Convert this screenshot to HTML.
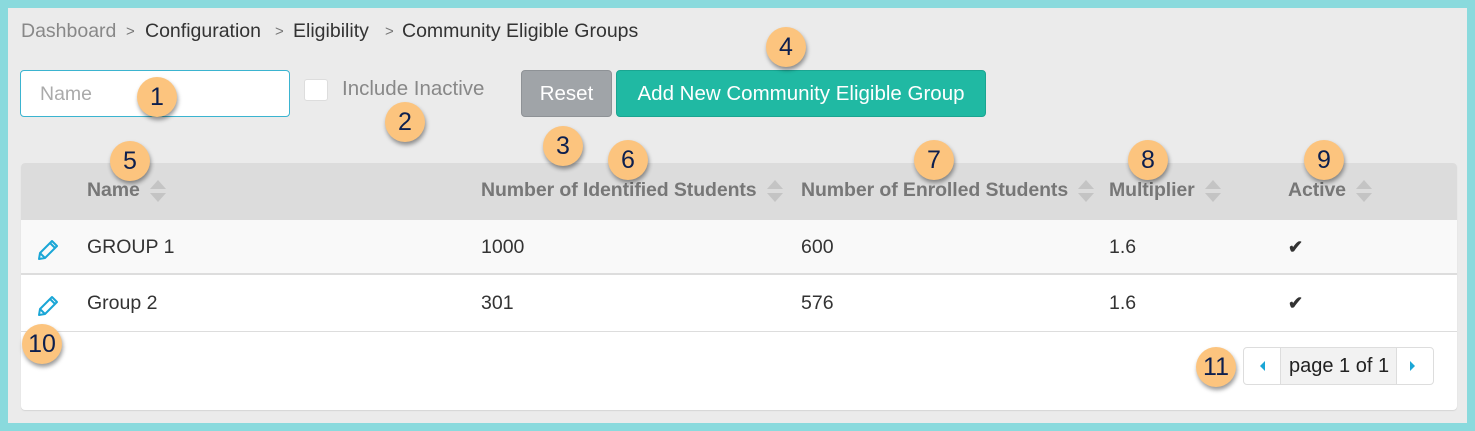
<!DOCTYPE html>
<html><head><meta charset="utf-8"><style>
*{box-sizing:border-box;margin:0;padding:0}
body{width:1475px;height:431px;background:#8adadd;position:relative;overflow:hidden;font-family:"Liberation Sans",sans-serif}
.in{position:absolute;left:8px;top:8px;width:1459px;height:415px;background:#ebebeb}
.a{position:absolute;white-space:nowrap}
.bc{top:20px;font-size:19.5px;color:#333}
.bc .g{color:#888}
.sep{color:#777;font-size:15px}
.inp{left:20px;top:70px;width:270px;height:47px;background:#fff;border:1px solid #3bb4d0;border-radius:4px;color:#aaa;font-size:19.5px;padding:12px 19px}
.cb{left:304px;top:79px;width:24px;height:22px;background:#fff;border:1px solid #ddd;border-radius:3px}
.btn{top:70px;height:47px;border-radius:4px;color:#fff;font-size:20.5px;line-height:45px;text-align:center}
.card{left:21px;top:163px;width:1436px;height:247px;background:#fff;border-radius:4px;box-shadow:0 1px 1px #d5d5d5;overflow:hidden}
.hd{position:absolute;left:0;top:0;width:100%;height:57px;background:#dcdcdc}
.r1{position:absolute;left:0;top:57px;width:100%;height:55px;background:#f9f9f9;border-bottom:2px solid #ddd}
.r2{position:absolute;left:0;top:114px;width:100%;height:55px;border-bottom:1px solid #ddd}
.h{top:16px;font-size:19.5px;font-weight:bold;color:#777;letter-spacing:-0.1px}
.s{display:inline-block;vertical-align:middle;margin-left:10px;width:16px;height:24px;position:relative}
.s:before{content:"";position:absolute;left:0;top:1px;border:8px solid transparent;border-top:0;border-bottom:9px solid #c4c4c4}
.s:after{content:"";position:absolute;left:0;top:14px;border:8px solid transparent;border-bottom:0;border-top:9px solid #c4c4c4}
.c{font-size:19.5px;color:#333}
.ck{font-size:18px;color:#333;font-weight:bold}
.bd{position:absolute;width:40px;height:40px;border-radius:50%;background:#fcc47e;color:#0d1f4e;font-size:25px;text-align:center;line-height:40px;box-shadow:1px 3px 4px rgba(0,0,0,.4)}
.pg{left:1243px;top:347px;width:191px;height:38px;border:1px solid #ddd;border-radius:4px;background:#fff}
</style></head><body>
<div class="in"></div>
<div class="a bc" style="left:21px"><span class="g">Dashboard</span></div>
<div class="a bc sep" style="left:126px;top:23px">&gt;</div>
<div class="a bc" style="left:145px">Configuration</div>
<div class="a bc sep" style="left:275px;top:23px">&gt;</div>
<div class="a bc" style="left:293px">Eligibility</div>
<div class="a bc sep" style="left:385px;top:23px">&gt;</div>
<div class="a bc" style="left:402px">Community Eligible Groups</div>
<div class="a inp">Name</div>
<div class="a cb"></div>
<div class="a" style="left:342px;top:77px;font-size:20.5px;color:#888">Include Inactive</div>
<div class="a btn" style="left:521px;width:91px;background:#a0a4a8;border:1px solid #8e9296">Reset</div>
<div class="a btn" style="left:616px;width:370px;background:#20b9a3;border:1px solid #1aa591">Add New Community Eligible Group</div>
<div class="a card">
<div class="hd"></div><div class="r1"></div><div class="r2"></div>
<div class="a h" style="left:66px">Name<span class="s"></span></div>
<div class="a h" style="left:460px">Number of Identified Students<span class="s"></span></div>
<div class="a h" style="left:780px">Number of Enrolled Students<span class="s"></span></div>
<div class="a h" style="left:1088px">Multiplier<span class="s"></span></div>
<div class="a h" style="left:1267px">Active<span class="s"></span></div>
<svg class="a" style="left:15px;top:73px" width="26" height="26" viewBox="0 0 26 26" fill="none" stroke="#1aa6d6" stroke-width="2" stroke-linejoin="round"><path d="M4 17 L16 5 L21 10 L9 22 L3 23 Z M14 7 L19 12 M4 17 L9 22"/></svg>
<div class="a c" style="left:66px;top:73px">GROUP 1</div>
<div class="a c" style="left:460px;top:73px">1000</div>
<div class="a c" style="left:780px;top:73px">600</div>
<div class="a c" style="left:1088px;top:73px">1.6</div>
<div class="a ck" style="left:1267px;top:74px">✔</div>
<svg class="a" style="left:15px;top:129px" width="26" height="26" viewBox="0 0 26 26" fill="none" stroke="#1aa6d6" stroke-width="2" stroke-linejoin="round"><path d="M4 17 L16 5 L21 10 L9 22 L3 23 Z M14 7 L19 12 M4 17 L9 22"/></svg>
<div class="a c" style="left:66px;top:129px">Group 2</div>
<div class="a c" style="left:460px;top:129px">301</div>
<div class="a c" style="left:780px;top:129px">576</div>
<div class="a c" style="left:1088px;top:129px">1.6</div>
<div class="a ck" style="left:1267px;top:130px">✔</div>
</div>
<div class="a pg">
<div class="a" style="left:36px;top:0;width:117px;height:36px;background:#f2f2f2;border-left:1px solid #ddd;border-right:1px solid #ddd"></div>
<div class="a" style="left:16px;top:13px;border:5px solid transparent;border-left:0;border-right:5px solid #1aa6d6"></div>
<div class="a" style="left:166px;top:13px;border:5px solid transparent;border-right:0;border-left:5px solid #1aa6d6"></div>
<div class="a" style="left:45px;top:7px;font-size:20px;color:#222">page 1 of 1</div>
</div>
<div class="bd" style="left:137px;top:77px">1</div>
<div class="bd" style="left:385px;top:102px">2</div>
<div class="bd" style="left:543px;top:126px">3</div>
<div class="bd" style="left:766px;top:27px">4</div>
<div class="bd" style="left:110px;top:141px">5</div>
<div class="bd" style="left:608px;top:140px">6</div>
<div class="bd" style="left:914px;top:140px">7</div>
<div class="bd" style="left:1128px;top:140px">8</div>
<div class="bd" style="left:1304px;top:140px">9</div>
<div class="bd" style="left:22px;top:324px">10</div>
<div class="bd" style="left:1196px;top:347px">11</div>
</body></html>
